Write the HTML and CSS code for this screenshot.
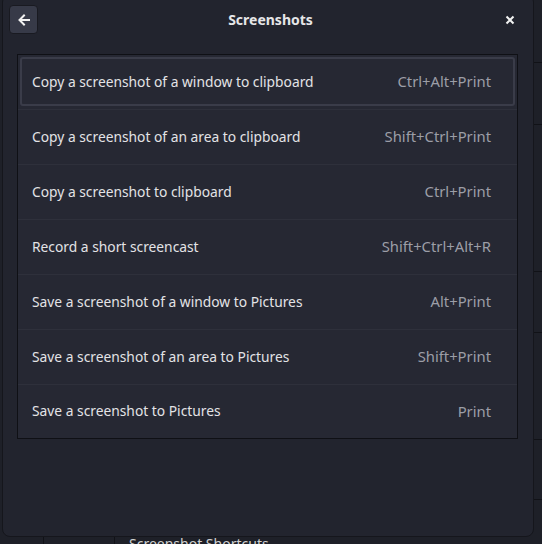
FILE: index.html
```html
<!DOCTYPE html>
<html>
<head>
<meta charset="utf-8">
<link rel="stylesheet" href="styles.css">
</head>
<body>
<div class="backdrop">
  <div class="bg-cols">
    <div class="bg-side"></div>
    <div class="bg-side2"></div>
    <div class="bg-main">
      <div class="bg-row r1"></div>
      <div class="bg-row r2"></div>
      <div class="bg-row r3"></div>
      <div class="bg-row r4"></div>
      <div class="bg-row r5"></div>
      <div class="bg-row r6"></div>
      <div class="bg-text">Screenshot Shortcuts</div>
    </div>
  </div>
</div>
<div class="dialog">
  <div class="header">
    <button class="back" aria-label="Back">
      <svg width="14" height="14" viewBox="0 0 14 14"><path d="M12 7H3M7 2.5L2.5 7 7 11.5" fill="none" stroke="#f2f2f2" stroke-width="2" stroke-linecap="square"/></svg>
    </button>
    <div class="title">Screenshots</div>
    <button class="close" aria-label="Close">
      <svg width="10" height="10" viewBox="0 0 10 10"><path d="M1.5 1.5L8.5 8.5M8.5 1.5L1.5 8.5" stroke="#f2f2f2" stroke-width="2"/></svg>
    </button>
  </div>
  <div class="list">
    <div class="row focus"><span class="name">Copy a screenshot of a window to clipboard</span><span class="key">Ctrl+Alt+Print</span></div>
    <div class="row"><span class="name">Copy a screenshot of an area to clipboard</span><span class="key">Shift+Ctrl+Print</span></div>
    <div class="row"><span class="name">Copy a screenshot to clipboard</span><span class="key">Ctrl+Print</span></div>
    <div class="row"><span class="name">Record a short screencast</span><span class="key">Shift+Ctrl+Alt+R</span></div>
    <div class="row"><span class="name">Save a screenshot of a window to Pictures</span><span class="key">Alt+Print</span></div>
    <div class="row"><span class="name">Save a screenshot of an area to Pictures</span><span class="key">Shift+Print</span></div>
    <div class="row last"><span class="name">Save a screenshot to Pictures</span><span class="key">Print</span></div>
  </div>
</div>
</body>
</html>
```
FILE: styles.css
```css
* { box-sizing: border-box; }
html, body { margin: 0; padding: 0; }
body {
  width: 542px;
  height: 544px;
  overflow: hidden;
  background: #1e2028;
  font-family: "Noto Sans", "Open Sans", sans-serif;
  position: relative;
}
.backdrop { width: 542px; height: 544px; overflow: hidden; }
.bg-cols { display: flex; height: 100%; }
.bg-side { width: 44px; border-right: 1px solid #111217; }
.bg-side2 { width: 71px; border-right: 1px solid #111217; }
.bg-main { flex: 1; display: flex; flex-direction: column; position: relative; }
.bg-row { border-bottom: 1px solid #111217; flex-shrink: 0; }
.r1 { height: 63px; }
.r2 { height: 62px; }
.r3 { height: 147px; }
.r4 { height: 61px; }
.r5 { height: 107px; }
.r6 { height: 60px; }
.bg-text { color: #d0d0d0; font-size: 14px; padding: 34px 0 0 14px; flex-shrink: 0; white-space: nowrap; }

.dialog {
  position: absolute;
  left: 2px;
  top: -6px;
  width: 532px;
  height: 543px;
  background: #22242e;
  border: 1px solid #15161c;
  border-radius: 8px;
  display: flex;
  flex-direction: column;
}
.header {
  height: 59px;
  display: flex;
  align-items: center;
  padding: 0 9px 10px 6px;
}
.back {
  width: 29px;
  height: 29px;
  border-radius: 4px;
  background: #373a48;
  border: 1px solid #191a21;
  display: flex;
  align-items: center;
  justify-content: center;
  padding: 0;
}
.title {
  flex: 1;
  text-align: center;
  color: #e6e6e8;
  font-weight: bold;
  font-size: 14px;
  padding-left: 8px;
}
.close {
  width: 29px;
  height: 29px;
  background: none;
  border: none;
  display: flex;
  align-items: center;
  justify-content: center;
  padding: 0;
}
.list {
  margin: 0 15px 0 14px;
  background: #262833;
  border: 1px solid #0f1015;
}
.row {
  height: 55px;
  display: flex;
  align-items: center;
  justify-content: space-between;
  padding: 0 26px 2px 14px;
  border-bottom: 1px solid #2e303b;
  color: #e3e3e6;
  font-size: 13.8px;
  position: relative;
}
.row.last { border-bottom: none; height: 53px; }
.row.focus::after {
  content: "";
  position: absolute;
  left: 2px; right: 2px; top: 2px; bottom: 3px;
  border: 2px solid #3a3c49;
  border-radius: 3px;
}
.key { color: #9c9ea7; font-size: 14.8px; }
```
